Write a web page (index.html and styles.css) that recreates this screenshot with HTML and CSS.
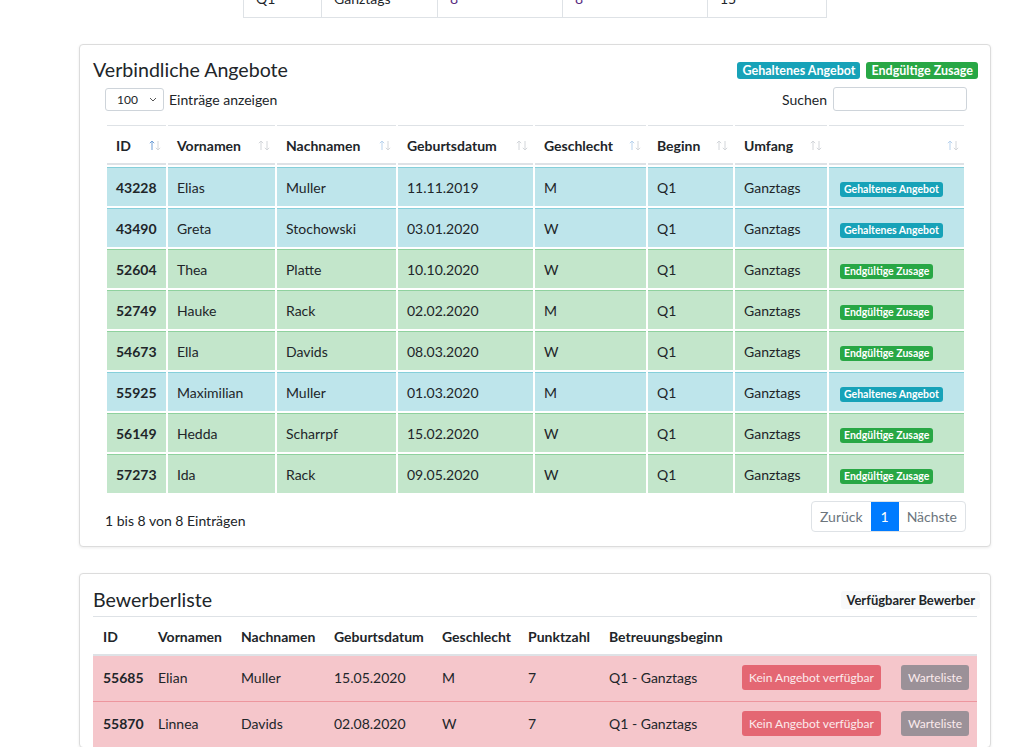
FILE: index.html
```html
<!DOCTYPE html>
<html lang="de">
<head>
<meta charset="utf-8">
<title>Angebote</title>
<link rel="stylesheet" href="styles.css">
</head>
<body>
<div class="page">
  <table class="top-table">
    <tr>
      <td class="w1">Q1</td>
      <td class="w2">Ganztags</td>
      <td class="w3 link">8</td>
      <td class="w4 link">8</td>
      <td class="w5">15</td>
    </tr>
  </table>

  <section class="card card-offers">
    <div class="card-head">
      <h2 class="card-title">Verbindliche Angebote</h2>
      <div class="legend">
        <span class="badge badge-info">Gehaltenes Angebot</span>
        <span class="badge badge-success">Endgültige Zusage</span>
      </div>
    </div>
    <div class="dt-wrapper">
      <div class="dt-controls">
        <label class="dt-length">
          <span class="select">100<svg class="chev" width="8" height="5" viewBox="0 0 8 5"><path d="M1 1l3 3 3-3" fill="none" stroke="#555" stroke-width="1"/></svg></span>
          <span>Einträge anzeigen</span>
        </label>
        <label class="dt-search">
          <span>Suchen</span>
          <span class="search-input"></span>
        </label>
      </div>
      <table class="dt-table">
        <colgroup>
          <col class="c1"><col class="c2"><col class="c3"><col class="c4"><col class="c5"><col class="c6"><col class="c7"><col class="c8">
        </colgroup>
        <thead>
          <tr>
            <th><div class="th-in"><span>ID</span><svg class="sort sort-active" width="12" height="11" viewBox="0 0 12 11"><path class="up" d="M3 10V1M0.8 3.2L3 1l2.2 2.2"/><path class="down" d="M9 1v9M6.8 7.8L9 10l2.2-2.2"/></svg></div></th>
            <th><div class="th-in"><span>Vornamen</span><svg class="sort" width="12" height="11" viewBox="0 0 12 11"><path class="up" d="M3 10V1M0.8 3.2L3 1l2.2 2.2"/><path class="down" d="M9 1v9M6.8 7.8L9 10l2.2-2.2"/></svg></div></th>
            <th><div class="th-in"><span>Nachnamen</span><svg class="sort sort-blue" width="12" height="11" viewBox="0 0 12 11"><path class="up" d="M3 10V1M0.8 3.2L3 1l2.2 2.2"/><path class="down" d="M9 1v9M6.8 7.8L9 10l2.2-2.2"/></svg></div></th>
            <th><div class="th-in"><span>Geburtsdatum</span><svg class="sort" width="12" height="11" viewBox="0 0 12 11"><path class="up" d="M3 10V1M0.8 3.2L3 1l2.2 2.2"/><path class="down" d="M9 1v9M6.8 7.8L9 10l2.2-2.2"/></svg></div></th>
            <th><div class="th-in"><span>Geschlecht</span><svg class="sort sort-blue" width="12" height="11" viewBox="0 0 12 11"><path class="up" d="M3 10V1M0.8 3.2L3 1l2.2 2.2"/><path class="down" d="M9 1v9M6.8 7.8L9 10l2.2-2.2"/></svg></div></th>
            <th><div class="th-in"><span>Beginn</span><svg class="sort" width="12" height="11" viewBox="0 0 12 11"><path class="up" d="M3 10V1M0.8 3.2L3 1l2.2 2.2"/><path class="down" d="M9 1v9M6.8 7.8L9 10l2.2-2.2"/></svg></div></th>
            <th><div class="th-in"><span>Umfang</span><svg class="sort" width="12" height="11" viewBox="0 0 12 11"><path class="up" d="M3 10V1M0.8 3.2L3 1l2.2 2.2"/><path class="down" d="M9 1v9M6.8 7.8L9 10l2.2-2.2"/></svg></div></th>
            <th><div class="th-in"><span></span><svg class="sort sort-blue" width="12" height="11" viewBox="0 0 12 11"><path class="up" d="M3 10V1M0.8 3.2L3 1l2.2 2.2"/><path class="down" d="M9 1v9M6.8 7.8L9 10l2.2-2.2"/></svg></div></th>
          </tr>
        </thead>
        <tbody>
          <tr class="row-info"><td class="id">43228</td><td>Elias</td><td>Muller</td><td>11.11.2019</td><td>M</td><td>Q1</td><td>Ganztags</td><td><span class="badge badge-sm badge-info">Gehaltenes Angebot</span></td></tr>
          <tr class="row-info"><td class="id">43490</td><td>Greta</td><td>Stochowski</td><td>03.01.2020</td><td>W</td><td>Q1</td><td>Ganztags</td><td><span class="badge badge-sm badge-info">Gehaltenes Angebot</span></td></tr>
          <tr class="row-success"><td class="id">52604</td><td>Thea</td><td>Platte</td><td>10.10.2020</td><td>W</td><td>Q1</td><td>Ganztags</td><td><span class="badge badge-sm badge-success">Endgültige Zusage</span></td></tr>
          <tr class="row-success"><td class="id">52749</td><td>Hauke</td><td>Rack</td><td>02.02.2020</td><td>M</td><td>Q1</td><td>Ganztags</td><td><span class="badge badge-sm badge-success">Endgültige Zusage</span></td></tr>
          <tr class="row-success"><td class="id">54673</td><td>Ella</td><td>Davids</td><td>08.03.2020</td><td>W</td><td>Q1</td><td>Ganztags</td><td><span class="badge badge-sm badge-success">Endgültige Zusage</span></td></tr>
          <tr class="row-info"><td class="id">55925</td><td>Maximilian</td><td>Muller</td><td>01.03.2020</td><td>M</td><td>Q1</td><td>Ganztags</td><td><span class="badge badge-sm badge-info">Gehaltenes Angebot</span></td></tr>
          <tr class="row-success"><td class="id">56149</td><td>Hedda</td><td>Scharrpf</td><td>15.02.2020</td><td>W</td><td>Q1</td><td>Ganztags</td><td><span class="badge badge-sm badge-success">Endgültige Zusage</span></td></tr>
          <tr class="row-success"><td class="id">57273</td><td>Ida</td><td>Rack</td><td>09.05.2020</td><td>W</td><td>Q1</td><td>Ganztags</td><td><span class="badge badge-sm badge-success">Endgültige Zusage</span></td></tr>
        </tbody>
      </table>
      <div class="dt-footer">
        <div class="dt-info">1 bis 8 von 8 Einträgen</div>
        <nav class="pagination">
          <span class="page-item">Zurück</span>
          <span class="page-item active">1</span>
          <span class="page-item">Nächste</span>
        </nav>
      </div>
    </div>
  </section>

  <section class="card card-applicants">
    <div class="card-head head-2">
      <h2 class="card-title">Bewerberliste</h2>
      <span class="badge badge-light">Verfügbarer Bewerber</span>
    </div>
    <table class="app-table">
      <colgroup>
        <col class="a1"><col class="a2"><col class="a3"><col class="a4"><col class="a5"><col class="a6"><col class="a7"><col class="a8"><col class="a9">
      </colgroup>
      <thead>
        <tr><th>ID</th><th>Vornamen</th><th>Nachnamen</th><th>Geburtsdatum</th><th>Geschlecht</th><th>Punktzahl</th><th>Betreuungsbeginn</th><th></th><th></th></tr>
      </thead>
      <tbody>
        <tr><td class="id">55685</td><td>Elian</td><td>Muller</td><td>15.05.2020</td><td>M</td><td>7</td><td>Q1 - Ganztags</td><td><span class="btn btn-danger">Kein Angebot verfügbar</span></td><td><span class="btn btn-secondary">Warteliste</span></td></tr>
        <tr><td class="id">55870</td><td>Linnea</td><td>Davids</td><td>02.08.2020</td><td>W</td><td>7</td><td>Q1 - Ganztags</td><td><span class="btn btn-danger">Kein Angebot verfügbar</span></td><td><span class="btn btn-secondary">Warteliste</span></td></tr>
      </tbody>
    </table>
  </section>
</div>
</body>
</html>
```
FILE: styles.css
```css
* { box-sizing: border-box; }
html, body { margin: 0; padding: 0; background: #fff; }
body {
  font-family: Lato, "Noto Sans", sans-serif;
  font-size: 14px;
  line-height: 21px;
  color: #212529;
  overflow: hidden;
  height: 747px;
}
.page { padding-left: 79px; width: 991px; }

/* remnant of upper table */
.top-table {
  border-collapse: collapse;
  margin: -24px 0 0 164px;
  table-layout: fixed;
}
.top-table td {
  border: 1px solid #dee2e6;
  padding: 10px 12px 8px;
  height: 41px;
}
.top-table .w1 { width: 78px; }
.top-table .w2 { width: 116px; }
.top-table .w3 { width: 125px; }
.top-table .w4 { width: 145px; }
.top-table .w5 { width: 119px; }
.top-table .link { color: #5a2d82; }

/* cards */
.card {
  border: 1px solid #dcdcdc;
  border-radius: 4px;
  box-shadow: 0 1px 3px rgba(0,0,0,.08);
  background: #fff;
  padding: 12px 12px 14px 13px;
}
.card-offers { margin-top: 26px; }
.card-applicants { margin-top: 26px; padding-bottom: 0; }

.card-head {
  display: flex;
  align-items: center;
  justify-content: space-between;
  height: 26px;
}
.card-title {
  margin: 0;
  font-weight: 400;
  font-size: 19.6px;
  line-height: 26px;
}
.legend { display: flex; gap: 6px; }

.badge {
  display: inline-block;
  color: #fff;
  font-weight: 700;
  font-size: 12.5px;
  line-height: 17px;
  height: 17px;
  padding: 0 5px;
  border-radius: 3px;
  white-space: nowrap;
}
.badge-info { background: #17a2b8; }
.badge-success { background: #28a745; }
.badge-light { background: #f8f9fa; color: #212529; font-size: 13px; height: 18px; line-height: 18px; padding: 0 5px; margin-right: -2px; }
.badge-sm {
  font-size: 10.5px;
  line-height: 15px;
  height: 15px;
  padding: 0 4px;
  vertical-align: middle;
  position: relative;
  top: 1px;
  margin-left: 2px;
}

/* datatable */
.dt-wrapper { margin: 0 11px 0 12px; }
.dt-controls {
  display: flex;
  justify-content: space-between;
  align-items: center;
  margin-top: 4px;
  height: 24px;
}
.dt-length, .dt-search { display: flex; align-items: center; gap: 5px; }
.select {
  width: 59px;
  height: 23px;
  border: 1px solid #ced4da;
  border-radius: 3px;
  font-size: 12px;
  line-height: 21px;
  padding-left: 11px;
  display: flex;
  align-items: center;
  justify-content: space-between;
  padding-right: 6px;
}
.chev { display: block; }
.search-input {
  width: 134px;
  height: 24px;
  border: 1px solid #ced4da;
  border-radius: 3px;
  margin-left: 1px;
}

.dt-table {
  border-collapse: separate;
  border-spacing: 2px;
  table-layout: fixed;
  width: 861px;
  margin-top: 12px;
}
.dt-table .c1 { width: 59px; }
.dt-table .c2 { width: 107px; }
.dt-table .c3 { width: 119px; }
.dt-table .c4 { width: 135px; }
.dt-table .c5 { width: 111px; }
.dt-table .c6 { width: 85px; }
.dt-table .c7 { width: 92px; }
.dt-table .c8 { width: 135px; }
.dt-table th {
  border-top: 1px solid #dee2e6;
  border-bottom: 2px solid #dee2e6;
  padding: 1px 5px 0 9px;
  height: 40px;
  text-align: left;
  font-weight: 700;
}
.th-in {
  display: flex;
  align-items: center;
  justify-content: space-between;
}
.sort { display: block; fill: none; stroke-width: 1; }
.sort .up, .sort .down { stroke: #d3d6da; }
.sort-blue .up { stroke: #b9d3ee; }
.sort-active .up { stroke: #6f9fd8; }
.dt-table td {
  height: 39px;
  padding: 0 9px;
  vertical-align: middle;
}
.row-info td { background: #bee5eb; border-top: 1px solid #86cfda; }
.row-success td { background: #c3e6cb; border-top: 1px solid #8fd19e; }
td.id { font-weight: 700; }

.dt-footer {
  display: flex;
  justify-content: space-between;
  align-items: flex-start;
  margin-top: 6px;
}
.dt-info { padding-top: 9px; }
.pagination {
  display: flex;
  height: 31px;
  border: 1px solid #dee2e6;
  border-radius: 4px;
  overflow: hidden;
  margin-right: 1px;
}
.page-item {
  padding: 0 8px;
  line-height: 29px;
  color: #6c757d;
}
.page-item.active {
  background: #007bff;
  color: #fff;
  width: 28px;
  text-align: center;
  padding: 0;
}

/* applicants */
.head-2 { height: 28px; margin-bottom: 2px; }
.app-table {
  border-collapse: collapse;
  table-layout: fixed;
  width: 884px;
}
.a1 { width: 55px; } .a2 { width: 83px; } .a3 { width: 93px; }
.a4 { width: 108px; } .a5 { width: 86px; } .a6 { width: 81px; }
.a7 { width: 133px; } .a8 { width: 159px; } .a9 { width: 86px; }
.app-table th {
  text-align: left;
  font-weight: 700;
  border-top: 1px solid #dee2e6;
  border-bottom: 2px solid #dee2e6;
  padding: 9px 10px 7px;
  white-space: nowrap;
}
.app-table td {
  background: #f5c6cb;
  border-top: 1px solid #ed969e;
  padding: 9px 10px 11px;
  vertical-align: middle;
  white-space: nowrap;
}
.btn {
  display: inline-block;
  height: 25px;
  line-height: 25px;
  padding: 0 7px;
  border-radius: 3px;
  color: #fff;
  font-size: 12px;
  opacity: .65;
  vertical-align: middle;
}
.btn-danger { background: #dc3545; }
.btn-secondary { background: #6c757d; }
```
